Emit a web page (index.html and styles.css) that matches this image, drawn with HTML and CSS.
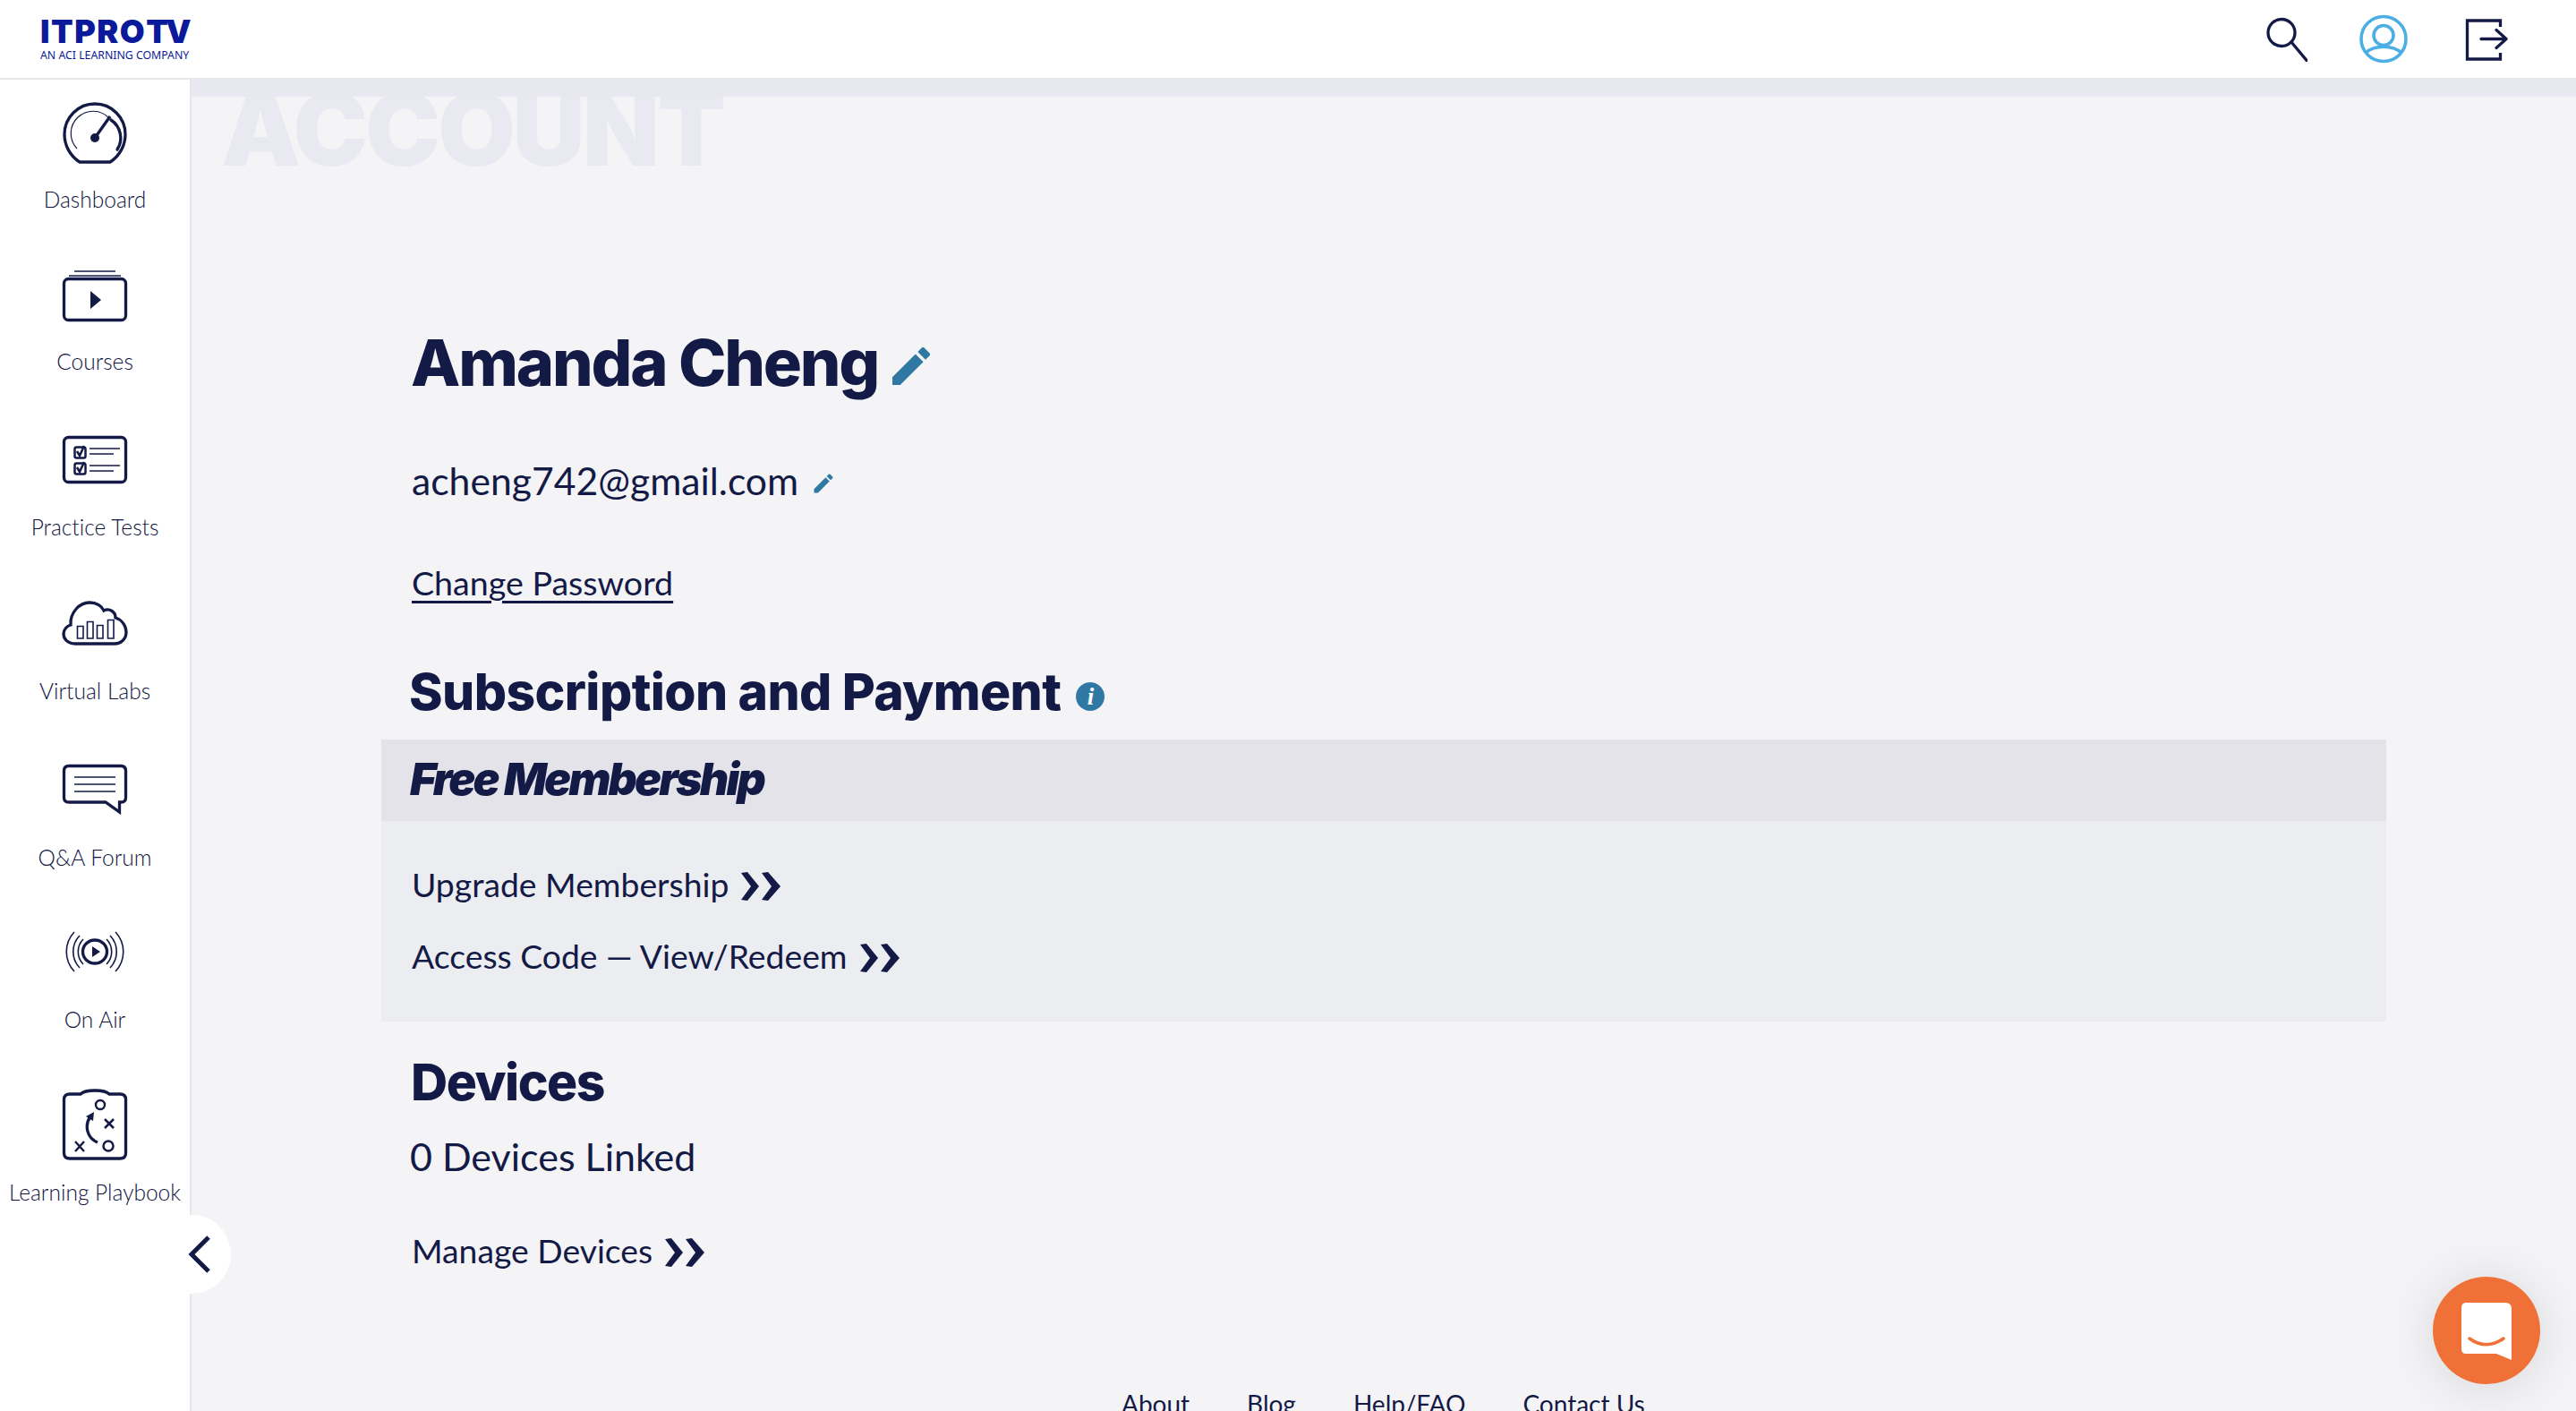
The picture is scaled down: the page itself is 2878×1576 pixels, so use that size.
FILE: index.html
```html
<!DOCTYPE html>
<html lang="en">
<head>
<meta charset="utf-8">
<title>Account</title>
<link rel="stylesheet" href="styles.css">
</head>
<body>
<div class="page">
  <header class="topbar">
    <a class="logo">
      <span class="logo-main">ITPRO<span class="logo-tv">TV</span></span>
      <span class="logo-sub">AN ACI LEARNING COMPANY</span>
    </a>
    <div class="top-icons">
      <svg class="top-icon" width="60" height="60" viewBox="0 0 60 60"><circle cx="31" cy="22.500" r="15" class="st3"/><path d="M42 33L59 53.500" class="st3 round"/></svg>
      <svg class="top-icon" width="60" height="60" viewBox="0 0 60 60"><g class="blue"><circle cx="30" cy="29.500" r="25"/><circle cx="30" cy="25.500" r="11"/><path d="M10 45C20 36 40 36 50 45"/></g></svg>
      <svg class="top-icon" width="60" height="60" viewBox="0 0 60 60"><path d="M45.500 16V9H8.500V52H45.500V45" class="st3 square"/><path d="M24 29.500H52M41 19.500L52 29.500L41 39.500" class="st3 round"/></svg>
    </div>
  </header>
  <div class="body">
    <nav class="sidebar">
      <a class="nav-item">
        <svg class="nav-icon" viewBox="0 0 84 84"><path d="M25 74C14 67 8 55 8 43A34 34 0 0 1 76 43C76 55 70 67 59 74Z" class="st3"/><path d="M22 59A24 24 0 0 1 58 25" class="st1"/><path d="M60 27A24 24 0 0 1 67 60" class="st3 round"/><path d="M42 47L59 23" class="st3"/><circle cx="42" cy="47" r="5" class="fill"/></svg>
        <span class="nav-label">Dashboard</span>
      </a>
      <a class="nav-item">
        <svg class="nav-icon" viewBox="0 0 84 84"><path d="M19 15H65M13 20H71" class="st15"/><rect x="7.500" y="23.500" width="69" height="46" rx="5" class="st3"/><path d="M37 37L49 47L37 57Z" class="fill"/></svg>
        <span class="nav-label">Courses</span>
      </a>
      <a class="nav-item">
        <svg class="nav-icon" viewBox="0 0 84 84"><rect x="7.500" y="17.500" width="69" height="50" rx="5" class="st3"/><rect x="19.500" y="28.500" width="12" height="12" rx="2" class="st2"/><rect x="19.500" y="46.500" width="12" height="12" rx="2" class="st2"/><path d="M22 33L25 38L30 27M22 51L25 56L30 45" class="st2"/><path d="M36 30H70M36 36H63M36 49H70M36 55H63" class="st15"/></svg>
        <span class="nav-label">Practice Tests</span>
      </a>
      <a class="nav-item">
        <svg class="nav-icon" viewBox="0 0 84 84"><path d="M20 65C11 65 7 59 7 54C7 49 11 45 15 44C14 30 25 19 36 19C44 19 50 23 52 28C58 25 65 29 65 36C72 38 77 45 77 52C77 60 71 65 64 65Z" class="st3"/><path d="M22.500 45.500H29V59H22.500ZM33.500 40.500H40V59H33.500ZM44.500 44.500H51V59H44.500ZM56.500 38.500H63V59H56.500Z" class="st15"/></svg>
        <span class="nav-label">Virtual Labs</span>
      </a>
      <a class="nav-item">
        <svg class="nav-icon" viewBox="0 0 84 84"><path d="M13 15.500H71Q76.500 15.500 76.500 21V51Q76.500 56 71 56H69.500V67L54 56H13Q7.500 56 7.500 51V21Q7.500 15.500 13 15.500Z" class="st3"/><path d="M19 28H65M19 36H65M19 44H65" class="st15"/></svg>
        <span class="nav-label">Q&amp;A Forum</span>
      </a>
      <a class="nav-item">
        <svg class="nav-icon" viewBox="0 0 84 84"><ellipse cx="42" cy="42" rx="13.500" ry="13" class="st3"/><path d="M39 36L48 42L39 48Z" class="fill"/><path d="M19 20A32 32 0 0 0 19 64M65 20A32 32 0 0 1 65 64M25 24A26 26 0 0 0 25 60M59 24A26 26 0 0 1 59 60M29 28A20 20 0 0 0 29 56M55 28A20 20 0 0 1 55 56" class="st15"/></svg>
        <span class="nav-label">On Air</span>
      </a>
      <a class="nav-item">
        <svg class="nav-icon" viewBox="0 0 84 84"><path d="M14 8H26Q30 4 42 4Q54 4 58 8H70Q76.500 8 76.500 14V74Q76.500 80 70 80H14Q7.500 80 7.500 74V14Q7.500 8 14 8Z" class="st3"/><circle cx="48" cy="20" r="5" class="st2"/><circle cx="57" cy="66" r="5.500" class="st2"/><path d="M53 36L63 46M63 36L53 46M20 61L30 72M30 61L20 72" class="st2"/><path d="M45 62C33 57 30 43 37 33" class="st3"/><path d="M32 33L41 28L40 38Z" class="fill"/></svg>
        <span class="nav-label">Learning Playbook</span>
      </a>
    </nav>
    <main class="main">
      <div class="band"></div>
      <div class="page-title">ACCOUNT</div>
      <div class="content">
        <div class="row name-row">
          <h1 class="name">Amanda Cheng</h1>
          <svg class="pencil-lg" viewBox="0 0 24 24"><path d="M3 17.250V21h3.750L17.810 9.940l-3.750-3.750L3 17.250zM20.710 7.040a1 1 0 0 0 0-1.410l-2.340-2.340a1 1 0 0 0-1.410 0l-1.830 1.830 3.750 3.750 1.830-1.830z"/></svg>
        </div>
        <div class="row email-row">
          <span class="email">acheng742@gmail.com</span>
          <svg class="pencil-sm" viewBox="0 0 24 24"><path d="M3 17.250V21h3.750L17.810 9.940l-3.750-3.750L3 17.250zM20.710 7.040a1 1 0 0 0 0-1.410l-2.340-2.340a1 1 0 0 0-1.410 0l-1.830 1.830 3.750 3.750 1.830-1.830z"/></svg>
        </div>
        <a class="password-link">Change Password</a>
        <div class="row sub-row">
          <h2 class="section-title">Subscription and Payment</h2>
          <span class="info">i</span>
        </div>
        <section class="panel">
          <div class="panel-head">Free Membership</div>
          <div class="panel-body">
            <a class="action">Upgrade Membership<svg class="chev" viewBox="0 0 44 32"><path d="M0 1L7 0L20 16L7 32L0 31L11 16ZM23 1L30 0L44 16L30 32L23 31L34 16Z"/></svg></a>
            <a class="action action-2">Access Code — View/Redeem<svg class="chev" viewBox="0 0 44 32"><path d="M0 1L7 0L20 16L7 32L0 31L11 16ZM23 1L30 0L44 16L30 32L23 31L34 16Z"/></svg></a>
          </div>
        </section>
        <h2 class="section-title devices-title">Devices</h2>
        <p class="device-count">0 Devices Linked</p>
        <a class="action manage">Manage Devices<svg class="chev" viewBox="0 0 44 32"><path d="M0 1L7 0L20 16L7 32L0 31L11 16ZM23 1L30 0L44 16L30 32L23 31L34 16Z"/></svg></a>
      </div>
      <footer class="footer">
        <a>About</a><a>Blog</a><a>Help/FAQ</a><a>Contact Us</a>
      </footer>
    </main>
  </div>
  <button class="collapse" aria-label="Collapse"><svg width="26" height="42" viewBox="0 0 26 42"><path d="M23 2L4 21L23 40" class="st4"/></svg></button>
  <div class="chat">
    <svg width="58" height="66" viewBox="0 0 58 66"><path d="M6 1H50Q57 1 57 8V65L40 58H6Q1 58 1 52V7Q1 1 6 1Z" fill="#fff"/><path d="M10 41C22 50 36 50 48 41" fill="none" stroke="#f07138" stroke-width="3.500" stroke-linecap="round"/></svg>
  </div>
</div>
</body>
</html>
```
FILE: styles.css
```css
* { box-sizing: border-box; }
html, body { margin: 0; padding: 0; height: 100%; overflow: hidden; }
body { font-family: Lato, "Noto Sans", sans-serif; font-variant-ligatures: none; color: #141a46; background: #f4f4f7; }
a { color: inherit; }
h1, h2, p { margin: 0; }

.page { position: relative; display: flex; flex-direction: column; height: 1576px; overflow: hidden; }

.topbar { flex: none; display: flex; justify-content: space-between; align-items: center; height: 89px; padding: 0 70px 0 45px; background: #fff; border-bottom: 2px solid #e6e6ee; }
.logo { display: flex; flex-direction: column; color: #0a1a9a; }
.logo-main { font-family: Inter, sans-serif; font-weight: 900; font-size: 36px; line-height: 34px; letter-spacing: 1.500px; white-space: nowrap; }
.logo-tv { letter-spacing: -3px; }
.logo-sub { font-family: "Noto Sans", sans-serif; font-size: 12.300px; line-height: 14px; white-space: nowrap; margin-top: 3px; }
.top-icons { display: flex; gap: 55px; }
.top-icon { display: block; }
.st3 { fill: none; stroke: #141a46; stroke-width: 3.300; }
.st4 { fill: none; stroke: #141a46; stroke-width: 5; }
.st2 { fill: none; stroke: #141a46; stroke-width: 2.500; }
.st15 { fill: none; stroke: #141a46; stroke-width: 1.600; }
.st1 { fill: none; stroke: #141a46; stroke-width: 1.200; }
.round { stroke-linecap: round; stroke-linejoin: round; }
.square { stroke-linecap: butt; }
.fill { fill: #141a46; }
.blue { fill: none; stroke: #4baee4; stroke-width: 3.600; }

.body { flex: 1; display: flex; min-height: 0; }
.sidebar { flex: none; width: 214px; padding-top: 18px; background: #fff; border-right: 2px solid #e4e4ea; display: flex; flex-direction: column; }
.nav-item { display: flex; flex-direction: column; align-items: center; height: 183px; }
.nav-item:nth-child(1) { height: 181px; }
.nav-item:nth-child(4) { height: 186px; }
.nav-item:nth-child(5) { height: 181px; }
.nav-item:nth-child(6) { height: 193px; }
.nav-icon { display: block; flex: none; width: 84px; height: 84px; }
.nav-label { font-size: 24.500px; font-weight: 300; line-height: 30px; margin-top: 18.500px; white-space: nowrap; color: #0f1440; }
.nav-item:nth-child(-n+2) .nav-label { margin-top: 17px; }

.main { position: relative; flex: 1; min-width: 0; }
.band { position: absolute; left: 0; right: 0; top: 0; height: 19px; background: #e8e8f1; z-index: 1; }
.page-title { font-family: Inter, sans-serif; font-weight: 900; font-size: 112px; line-height: 110px; height: 110px; margin-left: 33px; color: #e9e9f2; letter-spacing: -3px; }
.content { padding: 0 0 0 212px; width: 2452px; }
.row { display: flex; align-items: center; padding-left: 34px; }
.name-row { margin-top: 161px; height: 90px; }
.name { font-family: Inter, sans-serif; font-size: 72px; line-height: 90px; font-weight: 800; letter-spacing: -2.200px; margin-left: -1px; white-space: nowrap; }
.pencil-lg { width: 56px; height: 56px; fill: #2f78a3; margin: 8px 0 0 9px; }
.email-row { margin-top: 62px; height: 50px; }
.email { font-size: 42.700px; line-height: 50px; }
.pencil-sm { width: 28px; height: 28px; fill: #2f78a3; margin: 6px 0 0 14px; }
.password-link { display: block; margin: 66px 0 0 34px; font-size: 37.600px; line-height: 46px; text-decoration: underline; text-underline-offset: 6px; text-decoration-thickness: 3px; }
.sub-row { margin-top: 64px; height: 70px; padding-left: 31px; }
.section-title { font-family: Inter, sans-serif; font-size: 57px; line-height: 70px; font-weight: 800; letter-spacing: -.600px; white-space: nowrap; }
.info { display: flex; align-items: center; justify-content: center; width: 32px; height: 32px; margin: 10px 0 0 17px; border-radius: 50%; background: #2f78a3; color: #fff; font: italic 700 27px/32px "Liberation Serif", serif; }
.panel { margin-top: 18px; }
.panel-head { height: 91px; padding-left: 32px; background: #e3e3e9; font-family: Inter, sans-serif; font-size: 50px; line-height: 88px; font-weight: 900; font-style: italic; letter-spacing: -2.800px; }
.panel-body { height: 224px; padding: 48px 34px 0; background: #ecedf1; }
.action { display: flex; align-items: center; font-size: 37.300px; line-height: 46px; white-space: nowrap; }
.action-2 { margin-top: 34px; }
.chev { width: 44px; height: 32px; fill: #141a46; margin: 4px 0 0 14px; flex: none; }
.devices-title { margin: 33px 0 0 33px; letter-spacing: -1.500px; }
.device-count { margin: 21px 0 0 32px; font-size: 43px; line-height: 54px; }
.manage { margin: 55px 0 0 34px; }
.footer { display: flex; gap: 64px; padding: 131px 0 0 1039px; font-size: 28px; line-height: 34px; }
.collapse { position: absolute; left: 170px; top: 1357px; width: 88px; height: 88px; padding: 0 0 0 40px; border: 0; border-radius: 50%; background: #fff; display: flex; align-items: center; justify-content: flex-start; }
.collapse svg { display: block; }
.chat { position: absolute; left: 2718px; top: 1426px; width: 120px; height: 120px; padding: 28px 0 0 31px; border-radius: 50%; background: #f07138; box-shadow: 0 4px 60px rgba(0,0,0,.12); }
.chat svg { display: block; }
```
